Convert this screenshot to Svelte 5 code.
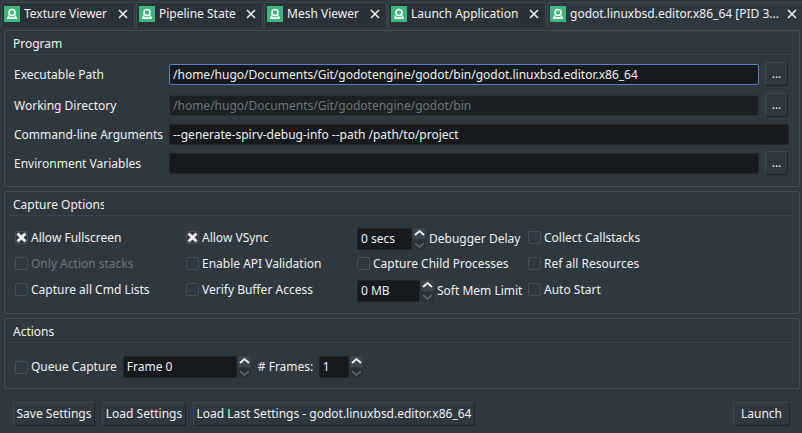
<script>
  const tabs = [
    { name: "Texture Viewer", width: 134 },
    { name: "Pipeline State", width: 127 },
    { name: "Mesh Viewer", width: 123 },
    { name: "Launch Application", width: 158 },
    { name: "godot.linuxbsd.editor.x86_64 [PID 3...", width: 257, active: true },
  ];
  const paths = [
    { label: "Executable Path", value: "/home/hugo/Documents/Git/godotengine/godot/bin/godot.linuxbsd.editor.x86_64", focus: true, browse: true },
    { label: "Working Directory", value: "/home/hugo/Documents/Git/godotengine/godot/bin", dim: true, browse: true },
    { label: "Command-line Arguments", value: "--generate-spirv-debug-info --path /path/to/project" },
    { label: "Environment Variables", value: "", browse: true },
  ];
</script>

{#snippet check(label, checked = false, disabled = false)}
  <span class="check" class:disabled>
    <span class="box">
      {#if checked}
        <svg width="11" height="11" viewBox="0 0 11 11"><path d="M1.5 1.5 L9.5 9.5 M9.5 1.5 L1.5 9.5" stroke="#eff0f1" stroke-width="3" /></svg>
      {/if}
    </span>
    {label}
  </span>
{/snippet}

{#snippet spin(value, width)}
  <span class="spin">
    <span class="field spin-field" style="width: {width}px">{value}</span>
    <span class="arrows">
      <span class="arrow"><svg width="13" height="10" viewBox="0 0 13 10"><path d="M2 7 L6.5 3 L11 7" fill="none" stroke="#eff0f1" stroke-width="2" /></svg></span>
      <span class="arrow low"><svg width="13" height="10" viewBox="0 0 13 10"><path d="M2 3 L6.5 7 L11 3" fill="none" stroke="#656d72" stroke-width="1.6" /></svg></span>
    </span>
  </span>
{/snippet}

<div class="window">
  <div class="tabs">
    {#each tabs as tab}
      <div class="tab" class:active={tab.active} style="width: {tab.width}px">
        <span class="tab-icon">
          <svg width="16" height="16" viewBox="0 0 16 16">
            <circle cx="8" cy="6.5" r="3" fill="none" stroke="#fff" stroke-width="1.6" />
            <path d="M3 12 H13" stroke="#fff" stroke-width="1.8" />
            <path d="M5 9.5 L4 12 M11 9.5 L12 12" stroke="#fff" stroke-width="1.4" />
          </svg>
        </span>
        <span class="tab-name">{tab.name}</span>
        <svg class="tab-close" width="10" height="10" viewBox="0 0 10 10"><path d="M1 1 L9 9 M9 1 L1 9" stroke="#eff0f1" stroke-width="1.6" /></svg>
      </div>
    {/each}
  </div>

  <div class="pane">
    <section class="group program">
      <h2>Program</h2>
      <div class="path-rows">
        {#each paths as row}
          <span class="path-label">{row.label}</span>
          <span class="field path-field" class:focus={row.focus} class:dim={row.dim} class:wide={!row.browse}>{row.value}</span>
          {#if row.browse}
            <span class="btn dots">...</span>
          {/if}
        {/each}
      </div>
    </section>

    <section class="group capture">
      <h2><span class="clipped">Capture Options</span></h2>
      <div class="options">
        <div class="col col-a">
          {@render check("Allow Fullscreen", true)}
          {@render check("Only Action stacks", false, true)}
          {@render check("Capture all Cmd Lists")}
        </div>
        <div class="col col-b">
          {@render check("Allow VSync", true)}
          {@render check("Enable API Validation")}
          {@render check("Verify Buffer Access")}
        </div>
        <div class="col col-c">
          <span class="inline">{@render spin("0 secs", 55)} Debugger Delay</span>
          {@render check("Capture Child Processes")}
          <span class="inline last">{@render spin("0 MB", 63)} Soft Mem Limit</span>
        </div>
        <div class="col col-d">
          {@render check("Collect Callstacks")}
          {@render check("Ref all Resources")}
          {@render check("Auto Start")}
        </div>
      </div>
    </section>

    <section class="group actions">
      <h2>Actions</h2>
      <div class="queue">
        {@render check("Queue Capture")}
        {@render spin("Frame 0", 114)}
        <span class="frames-label"># Frames:</span>
        {@render spin("1", 30)}
      </div>
    </section>

    <div class="footer">
      <span class="btn save">Save Settings</span>
      <span class="btn load">Load Settings</span>
      <span class="btn last-settings">Load Last Settings - godot.linuxbsd.editor.x86_64</span>
      <span class="btn launch">Launch</span>
    </div>
  </div>
</div>

<style>
  :global(body) {
    margin: 0;
    background: #2f383e;
  }
  .window {
    width: 802px;
    height: 433px;
    overflow: hidden;
    background: #2f383e;
    color: #eff0f1;
    font-family: "Noto Sans", sans-serif;
    font-size: 12px;
    line-height: 16px;
    white-space: nowrap;
  }

  .tabs {
    display: flex;
    height: 27px;
    padding: 2px 0 0 1px;
    box-sizing: border-box;
    gap: 1px;
  }
  .tab {
    display: flex;
    flex: none;
    align-items: center;
    box-sizing: border-box;
    height: 25px;
    padding: 0 6px 2px 2px;
    border: 1px solid #3f4a50;
    border-bottom: none;
    border-radius: 3px 3px 0 0;
    background: #2a3238;
  }
  .tab.active {
    background: #2f383e;
  }
  .tab-icon {
    display: flex;
    align-items: center;
    justify-content: center;
    width: 16px;
    height: 16px;
    background: #3eb57b;
    flex: none;
  }
  .tab-name {
    margin-left: 4px;
    flex: 1;
    overflow: hidden;
  }
  .tab-close {
    flex: none;
  }

  .pane {
    height: 403px;
    margin-top: 3px;
    padding: 0 2px 0 4px;
    box-sizing: border-box;
  }
  .group {
    border: 1px solid #434e54;
    border-radius: 2px;
    box-sizing: border-box;
    padding: 0 8px 0 4px;
    margin-bottom: 4px;
  }
  h2 {
    font-size: 12px;
    font-weight: 400;
    margin: 0;
    height: 23px;
    line-height: 25px;
    padding-left: 4px;
    border-bottom: 1px solid #3b464c;
  }
  .clipped {
    display: inline-block;
    width: 91px;
    overflow: hidden;
  }
  .program {
    height: 157px;
  }
  .path-rows {
    display: grid;
    grid-template-columns: 155px 590px 29px;
    grid-template-rows: 24px 24px 20px 24px;
    row-gap: 7px;
    padding: 7px 0 0 5px;
    align-items: center;
  }
  .path-label {
    padding-top: 2px;
  }
  .field {
    display: block;
    box-sizing: border-box;
    height: 21px;
    line-height: 19px;
    padding: 0 3px;
    background: #161a1d;
    border: 1px solid #1f2529;
    border-radius: 2px;
  }
  .path-field {
    width: 590px;
  }
  .path-field.wide {
    width: 620px;
    grid-column: 2 / 4;
  }
  .path-field.focus {
    border-color: #5b7fc7;
  }
  .path-field.dim {
    color: #6f767a;
    background: #1b2023;
    border-color: #2a3135;
  }
  .btn {
    display: inline-block;
    box-sizing: border-box;
    height: 24px;
    line-height: 22px;
    text-align: center;
    background: #2f383e;
    border: 1px solid #3f4a50;
    border-bottom-color: #1d2226;
    border-right-color: #1d2226;
    border-radius: 3px;
  }
  .dots {
    width: 23px;
    margin-left: 6px;
  }

  .capture {
    height: 123px;
  }
  .options {
    display: flex;
    padding: 11px 0 0 6px;
  }
  .col {
    display: flex;
    flex-direction: column;
    gap: 5px;
  }
  .col-a { width: 171px; }
  .col-b { width: 171px; }
  .col-c {
    width: 171px;
    gap: 3px;
    padding-top: 1px;
  }
  .col-c .last {
    margin-top: 3px;
  }
  .check {
    display: flex;
    align-items: center;
    gap: 3px;
    height: 21px;
  }
  .check.disabled {
    color: #6f767a;
  }
  .box {
    display: flex;
    align-items: center;
    justify-content: center;
    box-sizing: border-box;
    flex: none;
    width: 13px;
    height: 13px;
    border: 1px solid #454f55;
    border-radius: 2px;
  }
  .inline {
    display: flex;
    align-items: center;
    gap: 3px;
  }
  .spin {
    display: inline-flex;
    align-items: center;
    gap: 1px;
  }
  .spin-field {
    height: 22px;
    line-height: 20px;
  }
  .arrows {
    display: flex;
    flex-direction: column;
    width: 13px;
    gap: 1px;
  }
  .arrow {
    display: flex;
    align-items: center;
    justify-content: center;
    height: 10.5px;
    background: #3a444a;
    border-radius: 2px;
  }
  .arrow.low {
    background: #2b3338;
  }

  .actions {
    height: 71px;
  }
  .queue {
    display: flex;
    align-items: center;
    padding: 13px 0 0 6px;
    gap: 6px;
  }
  .frames-label {
    width: 55px;
    margin-left: 1px;
  }

  .footer {
    display: flex;
    gap: 7px;
    padding: 9px 10px 0 9px;
  }
  .save { width: 82px; }
  .load { width: 84px; }
  .last-settings { width: 282px; }
  .launch {
    margin-left: auto;
    width: 57px;
  }
</style>
